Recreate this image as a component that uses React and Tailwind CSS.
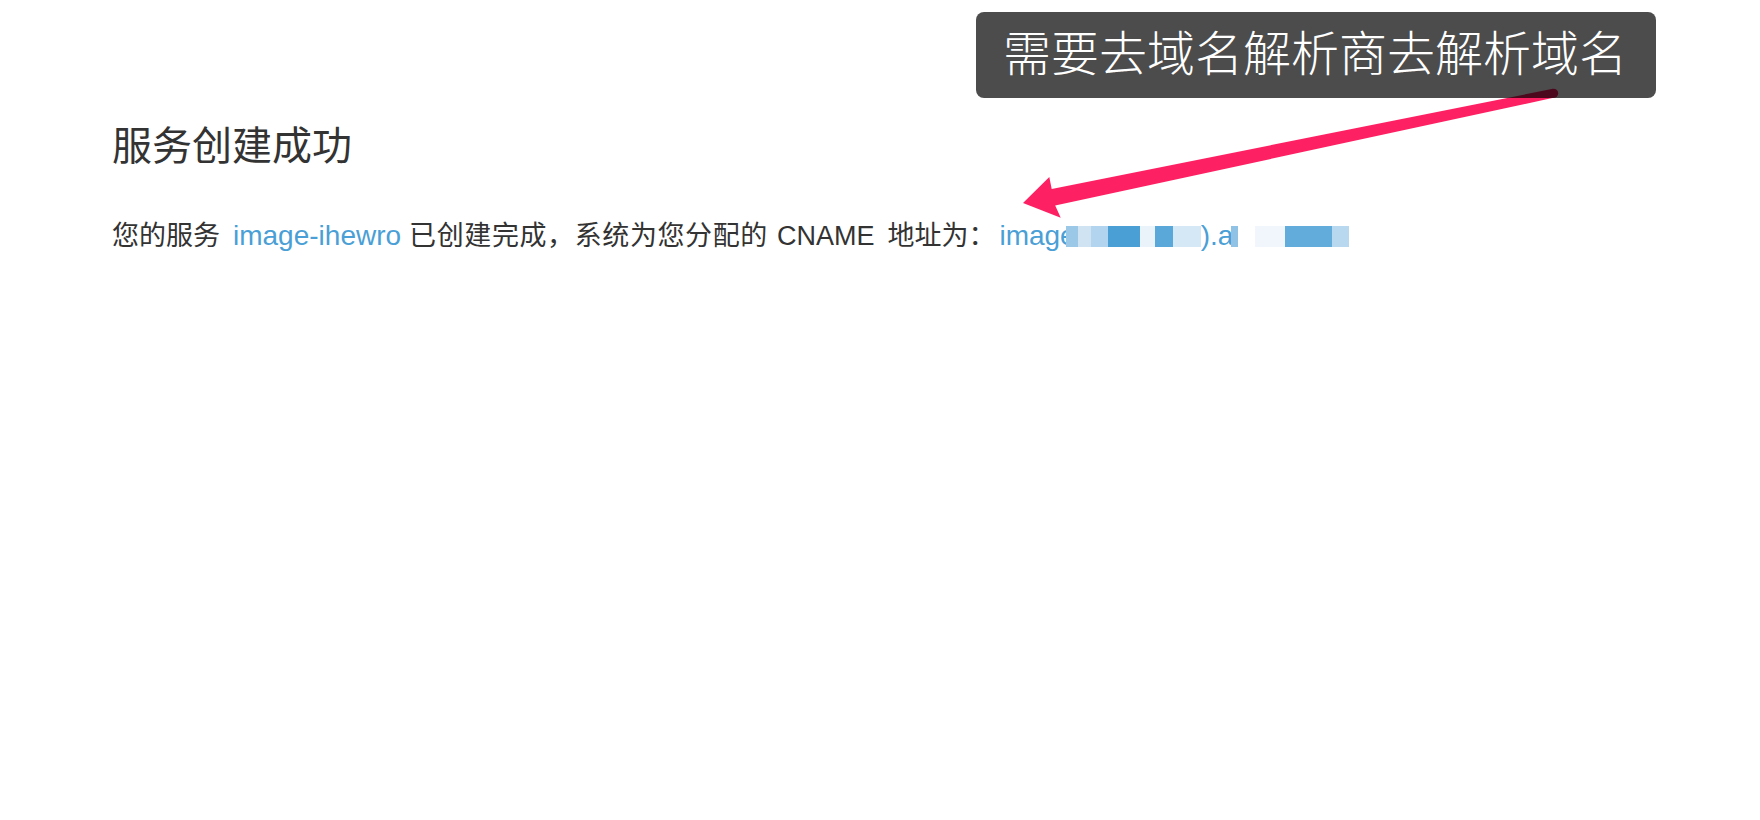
const blur1 = [
  { w: 12, c: 'bg-[#9cc8e8]' },
  { w: 13, c: 'bg-[#cfe3f3]' },
  { w: 17, c: 'bg-[#b3d4ee]' },
  { w: 32, c: 'bg-[#4a9fd5]' },
  { w: 15, c: 'bg-[#eaf3fa]' },
  { w: 18, c: 'bg-[#5aa8da]' },
  { w: 28, c: 'bg-[#d5e8f5]' },
];

const blur2 = [
  { w: 7, c: 'bg-[#8fc2e5]' },
  { w: 17, c: 'bg-white' },
  { w: 30, c: 'bg-[#f0f6fb]' },
  { w: 47, c: 'bg-[#62acdc]' },
  { w: 17, c: 'bg-[#b7d8ef]' },
];

// pink callout arrow, tapered shaft
const Arrow = () => (
  <svg className="absolute left-0 top-0 pointer-events-none" width="1760" height="820" viewBox="0 0 1760 820">
    <polygon
      fill="#fd2163"
      points="1023,203 1049.3,177.1 1051.7,188.9 1552.8,88.8 1554.6,97.6 1055.2,205.5 1060.7,217.7"
    />
    <circle cx="1553.7" cy="93.2" r="4.5" fill="#fd2163" />
  </svg>
);

export default function App() {
  return (
    <div className="relative w-full h-[820px] bg-white overflow-hidden font-['Liberation_Sans','Noto_Sans_CJK_SC',sans-serif] text-[#333]">
      <div className="px-[112px] pt-[122px]">
        <h1 className="text-[40px] leading-[48px] font-normal">服务创建成功</h1>
        <p className="mt-[46px] text-[27px] leading-[40px] flex items-center whitespace-nowrap">
          <span>您的服务</span>
          <a className="ml-[13px] text-[28px] text-[#4a9fd6]">image-ihewro</a>
          <span className="ml-[8px] tracking-[0.6px]">已创建完成，系统为您分配的</span>
          <span className="ml-[9px]">CNAME</span>
          <span className="ml-[13px]">地址为：</span>
          <a className="ml-[4px] text-[28px] text-[#4a9fd6] flex items-center">
            <span>image</span>
            <span className="flex items-center -ml-[10px]">
              {blur1.map((b, i) => (
                <span key={i} className={`inline-block h-[21px] ${b.c}`} style={{ width: b.w }} />
              ))}
            </span>
            <span>).a</span>
            <span className="flex items-center -ml-[2px]">
              {blur2.map((b, i) => (
                <span key={i} className={`inline-block h-[21px] ${b.c}`} style={{ width: b.w }} />
              ))}
            </span>
          </a>
        </p>
      </div>

      <Arrow />

      <div className="absolute left-[976px] top-[12px] w-[680px] h-[86px] rounded-lg bg-black/70 flex items-center pl-[27px]">
        <span className="text-white text-[48px] leading-none font-light whitespace-nowrap">需要去域名解析商去解析域名</span>
      </div>
    </div>
  );
}
